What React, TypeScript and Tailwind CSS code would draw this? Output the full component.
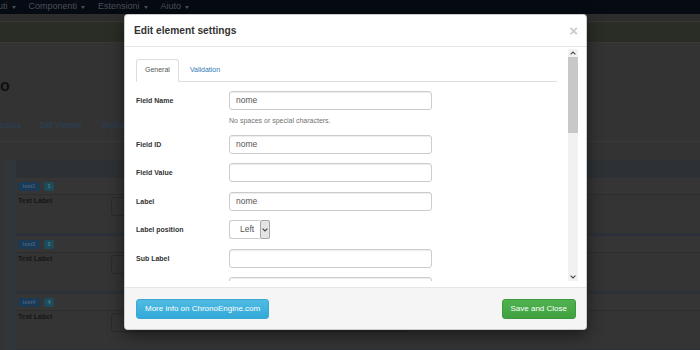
import React from "react";

type RowProps = { label: string; help?: string; children: React.ReactNode };

const Chevron = ({ up }: { up?: boolean }) => (
  <svg width="6" height="4" viewBox="0 0 6 4" className="block">
    <path
      d={up ? "M0.6 3.4L3 1L5.4 3.4" : "M0.6 0.6L3 3L5.4 0.6"}
      fill="none"
      stroke="#4a4a4a"
      strokeWidth="1.2"
    />
  </svg>
);

const Input = ({ value = "" }: { value?: string }) => (
  <div className="w-[203px] h-[19px] border border-[#ccc] rounded-[3px] pl-[6px] flex items-center text-[8.5px] text-[#555] shadow-[inset_0_1px_1px_rgba(0,0,0,0.075)]">
    {value}
  </div>
);

const Row = ({ label, help, children }: RowProps) => (
  <div className="flex mb-[9.4px]">
    <label className="w-[93px] shrink-0 pt-[5px] text-[7px] leading-[9px] font-bold text-[#333]">
      {label}
    </label>
    <div>
      {children}
      {help && (
        <p className="mt-[5.6px] text-[7px] leading-[10px] text-[#737373]">
          {help}
        </p>
      )}
    </div>
  </div>
);

// card of the dimmed page behind the modal
const BgCard = ({ name, num }: { name: string; num: string }) => (
  <div>
    <div className="h-[17px] bg-[#353535] border-b border-[#2d2d2d] flex items-center gap-[4px] pl-[2px]">
      <span className="h-[9px] w-[22px] rounded-[2px] bg-[#1b3a56] text-[#45617a] text-[5.5px] font-bold flex items-center justify-center">
        {name}
      </span>
      <span className="h-[9px] w-[10px] rounded-[2px] bg-[#1d4b59] text-[#4f7f8c] text-[5.5px] font-bold flex items-center justify-center">
        {num}
      </span>
    </div>
    <div className="h-[38px] bg-[#343434] flex pl-[2px]">
      <span className="w-[93px] pt-[1px] text-[7px] leading-[10px] font-bold text-[#161616]">
        Text Label
      </span>
      <div className="mt-[2px] w-[300px] h-[19px] border border-[#2a2a2a] rounded-[3px]" />
    </div>
    <div className="h-[3px] bg-[#2a3138]" />
  </div>
);

export default function App() {
  return (
    <div className="relative w-[700px] h-[350px] overflow-hidden bg-[#333] font-['Liberation_Sans',Arial,sans-serif]">
      {/* page behind the backdrop */}
      <div className="flex flex-col">
        <nav className="h-[14px] bg-[#060a12] flex items-center gap-[13px] -ml-[2px] text-[9px] text-[#4b5058]">
          {["uti", "Componenti", "Estensioni", "Aiuto"].map((t) => (
            <span key={t} className="flex items-center gap-[4px]">
              {t}
              <span className="w-0 h-0 border-x-[2.5px] border-t-[3px] border-x-transparent border-t-[#4b5058]" />
            </span>
          ))}
        </nav>
        <div className="h-[7px] bg-[#2d2d2d]" />
        <div className="h-[22px] bg-[#2a2d25] border-y border-[#363a30]" />
        <div className="pt-[33px] text-[16px] leading-[20px] font-bold text-[#101010]">o</div>
        <div className="mt-[23px] pb-[10px] border-b border-[#3a3a3a] flex gap-[19px] text-[9px] leading-[12px] text-[#29415a]">
          <span>cales</span>
          <span>DB Viewer</span>
          <span>Styles</span>
        </div>
        <div className="mt-[18px] ml-[4px] flex">
          <div className="w-[12px] bg-[#31363b]" />
          <div className="flex-1">
            <div className="h-[18px] bg-[#2d3135]" />
            <BgCard name="text1" num="1" />
            <BgCard name="text2" num="2" />
            <BgCard name="text4" num="4" />
          </div>
        </div>
      </div>

      {/* modal */}
      <div className="absolute left-[124px] top-[14px] w-[463px] h-[316px] bg-white border border-black/20 rounded-[4px] shadow-[0_5px_15px_rgba(0,0,0,0.5)] flex flex-col overflow-hidden">
        <div className="h-[32px] shrink-0 border-b border-[#e5e5e5] flex items-center justify-between pl-[9px] pr-[8px]">
          <h4 className="text-[10.2px] font-bold text-[#333]">Edit element settings</h4>
          <span className="text-[15px] leading-none font-bold text-[#cbcbcb]">×</span>
        </div>

        <div className="h-[240px] shrink-0 pt-[2px] pb-[6px] pl-[11px] pr-[8px] flex">
          <div className="flex-1 overflow-hidden pt-[10px] pr-[11px]">
            <div className="flex items-end h-[23px] border-b border-[#ddd]">
              <div className="h-[23px] -mb-px px-[8px] border border-[#ddd] border-b-white rounded-t-[3px] bg-white flex items-center text-[7px] text-[#555]">
                General
              </div>
              <div className="ml-[2px] h-[22px] px-[9px] flex items-center text-[7px] text-[#337ab7]">
                Validation
              </div>
            </div>
            <div className="mt-[9px]">
              <Row label="Field Name" help="No spaces or special characters.">
                <Input value="nome" />
              </Row>
              <Row label="Field ID">
                <Input value="nome" />
              </Row>
              <Row label="Field Value">
                <Input />
              </Row>
              <Row label="Label">
                <Input value="nome" />
              </Row>
              <Row label="Label position">
                <div className="flex h-[19px]">
                  <div className="w-[31px] h-full border border-r-0 border-[#ccc] rounded-l-[3px] pl-[10px] flex items-center text-[8.5px] text-[#555]">
                    Left
                  </div>
                  <div className="w-[10px] h-full border border-[#a6a6a6] bg-[#e4e4e4] rounded-[2px] flex items-center justify-center">
                    <Chevron />
                  </div>
                </div>
              </Row>
              <Row label="Sub Label">
                <Input />
              </Row>
              <Row label="">
                <Input />
              </Row>
            </div>
          </div>
          {/* scrollbar */}
          <div className="w-[10px] bg-[#f1f1f1] flex flex-col items-center">
            <div className="h-[8px] flex items-center justify-center">
              <Chevron up />
            </div>
            <div className="w-full h-[76px] bg-[#c8c8c8]" />
            <div className="flex-1" />
            <div className="h-[9px] flex items-center justify-center">
              <Chevron />
            </div>
          </div>
        </div>

        <div className="flex-1 bg-[#f5f5f5] border-t border-[#e5e5e5] flex items-center justify-between pl-[11px] pr-[10px]">
          <button className="h-[20px] px-[8px] rounded-[3px] border border-[#3aa8d4] bg-gradient-to-b from-[#4fbbe2] to-[#31a9d8] text-white text-[8px]">
            More info on ChronoEngine.com
          </button>
          <button className="h-[20px] px-[8px] rounded-[3px] border border-[#3d993d] bg-gradient-to-b from-[#4fb34f] to-[#40a040] text-white text-[8px]">
            Save and Close
          </button>
        </div>
      </div>
    </div>
  );
}
